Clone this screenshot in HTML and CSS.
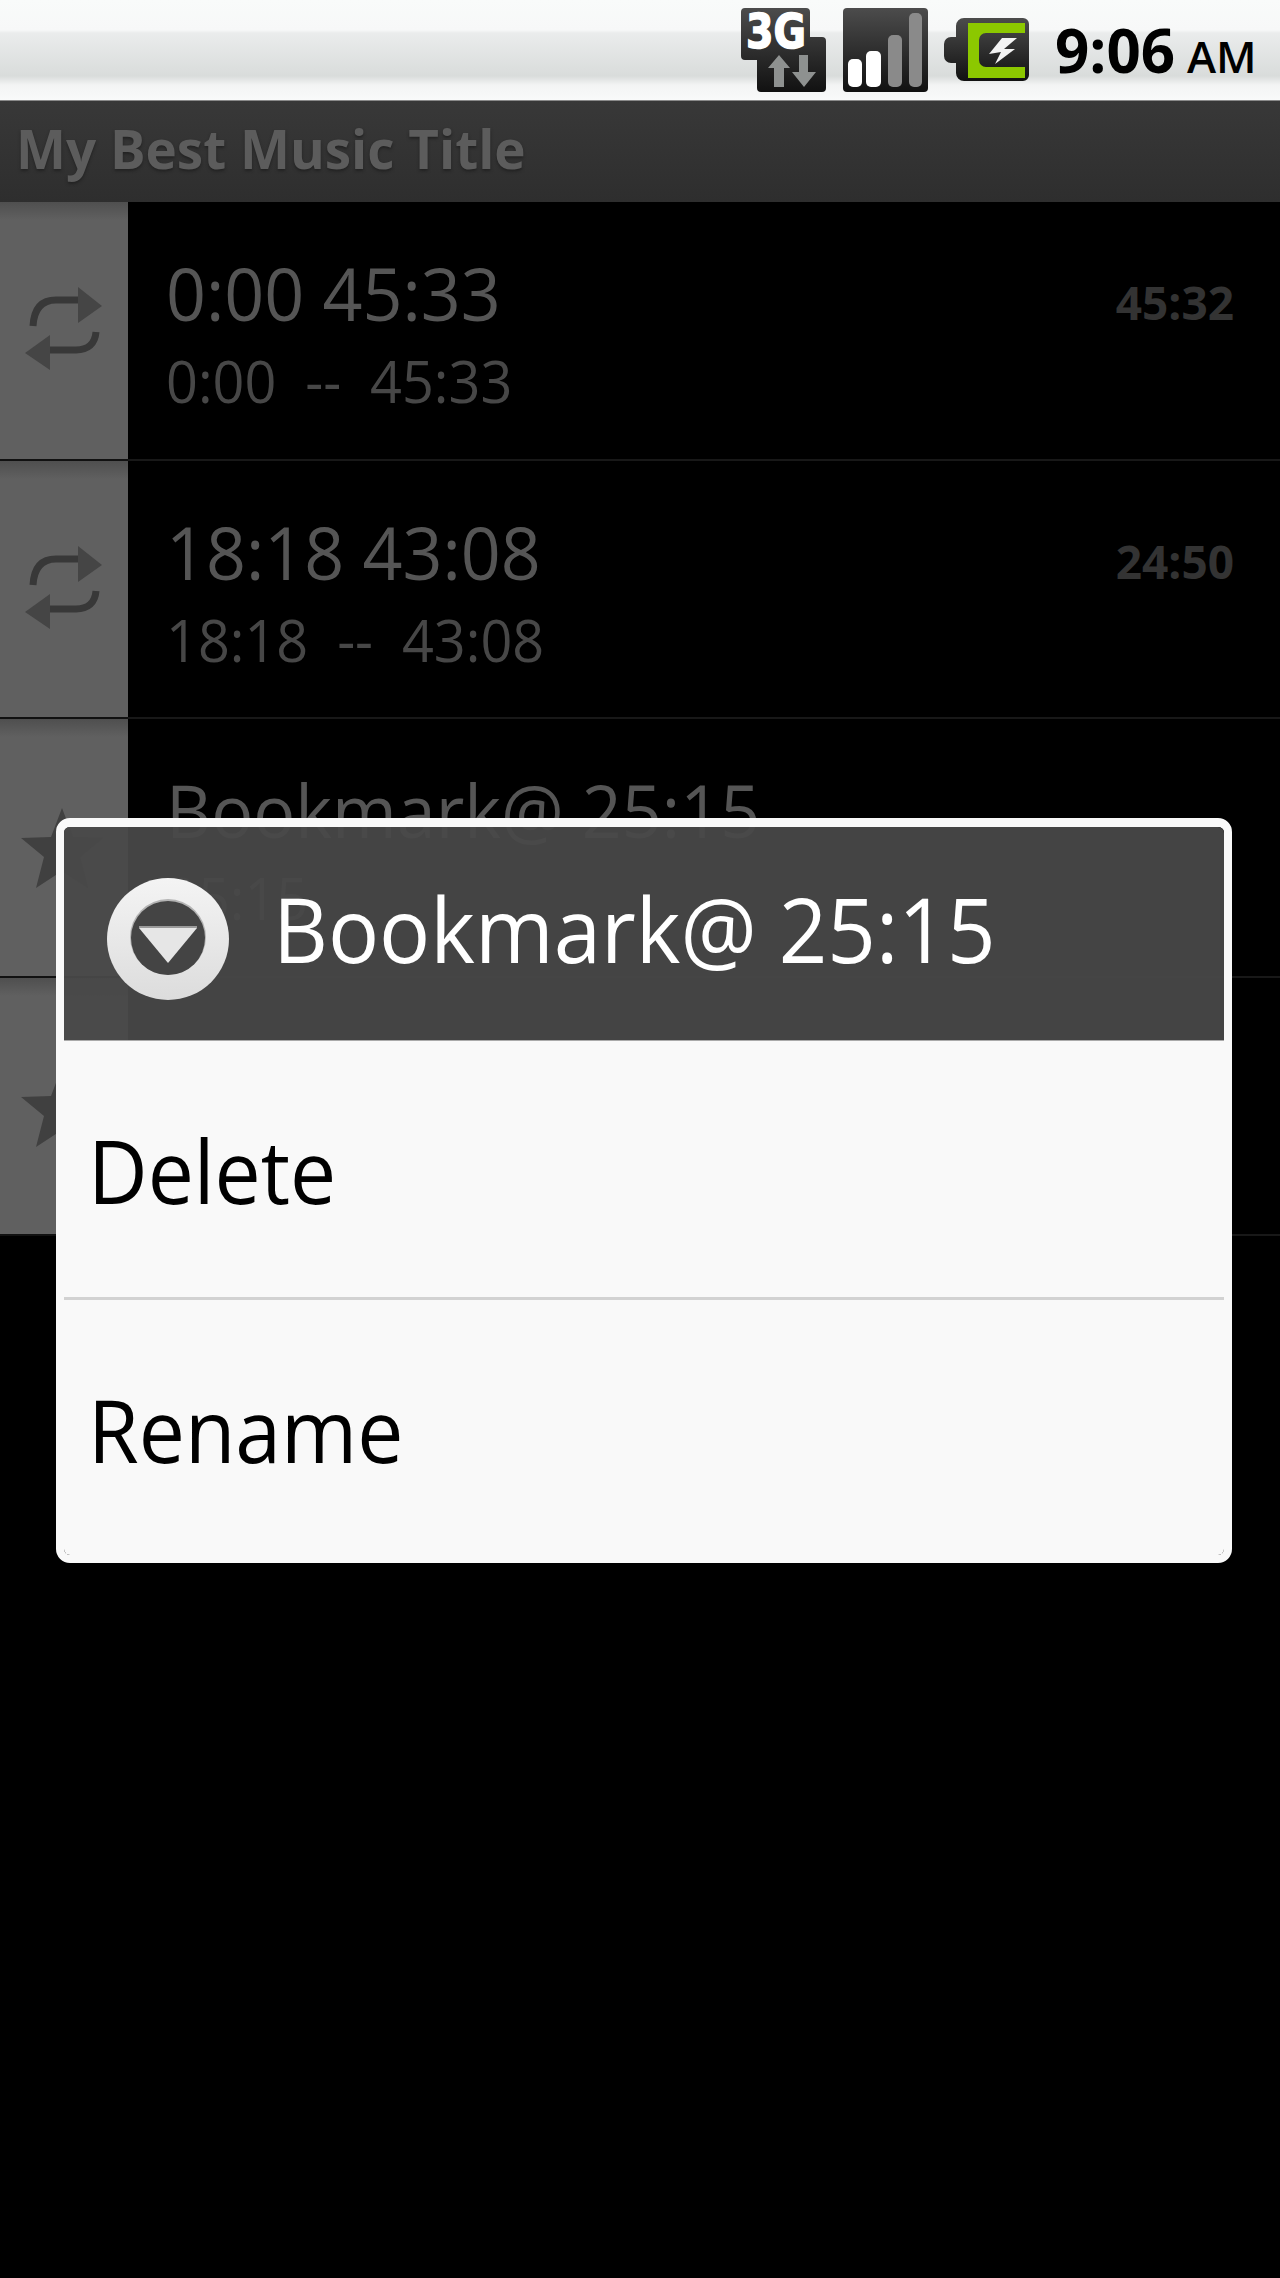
FILE: index.html
```html
<!DOCTYPE html>
<html lang="en">
<head>
  <meta charset="UTF-8" />
  <title>My Best Music Title</title>
  <link rel="stylesheet" href="styles.css">
</head>
<body>

  <div class="screen">
    <div class="status-bar">
      <!-- 3G data icon -->
      <svg class="icon-3g" width="86" height="84" viewBox="0 0 86 84">
        <path d="M4 0H65a4 4 0 0 1 4 4V29H81a4 4 0 0 1 4 4V80a4 4 0 0 1-4 4H20a4 4 0 0 1-4-4V52H4a4 4 0 0 1-4-4V4a4 4 0 0 1 4-4z" fill="url(#iconDark)"/>
        <text x="5" y="40" class="icon-3g-text" textLength="60" lengthAdjust="spacingAndGlyphs">3G</text>
        <path d="M38 47l11 13h-6v19h-10V60h-6z" fill="#8e9190"/>
        <path d="M58 47h9v17h8l-12 15-12-15h7z" fill="#8e9190"/>
      </svg>
      <!-- signal bars -->
      <svg class="icon-signal" width="85" height="84" viewBox="0 0 85 84">
        <rect width="85" height="84" rx="4" fill="url(#iconDark)"/>
        <rect x="5" y="51" width="14" height="28" rx="5" fill="#fff"/>
        <rect x="23" y="43" width="15" height="36" rx="5" fill="#fff"/>
        <rect x="45" y="27" width="14" height="52" rx="5" fill="#8a8a8a"/>
        <rect x="66" y="5" width="13" height="74" rx="5" fill="#8a8a8a"/>
      </svg>
      <!-- charging battery -->
      <svg class="icon-battery" width="85" height="63" viewBox="0 0 85 63">
        <path d="M20 0H79a6 6 0 0 1 6 6V57a6 6 0 0 1-6 6H20a8 8 0 0 1-8-8V45H7a7 7 0 0 1-7-7V26a7 7 0 0 1 7-7h5V8a8 8 0 0 1 8-8z" fill="url(#iconDark)"/>
        <path d="M24 5H81V15H42a7 7 0 0 0-7 7V42a7 7 0 0 0 7 7H81V60H24z" fill="#8cc800"/>
        <path d="M73 20H58L45 36 57 34 51 46 71 31H60z" fill="#f4f4f4"/>
      </svg>
      <div class="clock">9:06<span class="clock-ampm">AM</span></div>
    </div>

    <div class="title-bar">My Best Music Title</div>

    <div class="bookmark-list">
      <div class="row">
        <div class="row-icon">
          <svg width="128" height="128" viewBox="0 0 128 128"><use href="#repeatIcon"/></svg>
        </div>
        <div class="row-text">
          <div class="row-title">0:00 45:33</div>
          <div class="row-sub">0:00  --  45:33</div>
        </div>
        <div class="row-time">45:32</div>
      </div>

      <div class="row">
        <div class="row-icon">
          <svg width="128" height="128" viewBox="0 0 128 128"><use href="#repeatIcon"/></svg>
        </div>
        <div class="row-text">
          <div class="row-title">18:18 43:08</div>
          <div class="row-sub">18:18  --  43:08</div>
        </div>
        <div class="row-time">24:50</div>
      </div>

      <div class="row">
        <div class="row-icon">
          <svg width="128" height="128" viewBox="0 0 128 128"><use href="#starIcon"/></svg>
        </div>
        <div class="row-text">
          <div class="row-title">Bookmark@ 25:15</div>
          <div class="row-sub">25:15</div>
        </div>
      </div>

      <div class="row">
        <div class="row-icon">
          <svg width="128" height="128" viewBox="0 0 128 128"><use href="#starIcon"/></svg>
        </div>
      </div>
    </div>

    <!-- Context menu over the list -->
    <div class="dialog">
      <div class="dialog-header">
        <svg class="dialog-icon" width="122" height="122" viewBox="0 0 122 122">
          <circle cx="61" cy="61" r="61" fill="url(#ringFill)"/>
          <circle cx="61" cy="59" r="38" fill="#b4b4b4"/>
          <circle cx="61" cy="60" r="37" fill="#444"/>
          <path d="M32 50H90L61 85z" fill="#e6e6e6"/>
          <rect x="32" y="48" width="58" height="2" fill="#9a9a9a"/>
        </svg>
        <div class="dialog-title">Bookmark@ 25:15</div>
      </div>
      <div class="dialog-menu">
        <div class="menu-item"><span class="menu-label">Delete</span></div>
        <div class="menu-item"><span class="menu-label">Rename</span></div>
      </div>
    </div>
  </div>

  <!-- Shared icon shapes and gradients -->
  <svg class="svg-defs" width="0" height="0">
    <defs>
      <linearGradient id="iconDark" x1="0" y1="0" x2="0" y2="1">
        <stop offset="0" stop-color="#4c4c4c"/>
        <stop offset="1" stop-color="#111"/>
      </linearGradient>
      <linearGradient id="ringFill" x1="0" y1="0" x2="0" y2="1">
        <stop offset="0" stop-color="#f4f4f4"/>
        <stop offset="1" stop-color="#dcdcdc"/>
      </linearGradient>
      <g id="repeatIcon">
        <path d="M33 60C34 42 42 34 56 34H80" fill="none" stroke="#383838" stroke-width="7"/>
        <path d="M78 21L102 40 78 57z" fill="#454545"/>
        <path d="M96 66C95 78 88 84 76 84H48" fill="none" stroke="#383838" stroke-width="7"/>
        <path d="M50 69L25 87 50 104z" fill="#454545"/>
      </g>
      <g id="starIcon">
        <path d="M62 25L73 54 103 55 80 74 88 105 62 88 36 105 44 74 21 55 51 54z" fill="#404040"/>
      </g>
    </defs>
  </svg>

</body>
</html>
```

FILE: styles.css
```css
html, body {
  margin: 0;
  background: #000;
}

body {
  font-family: "Open Sans", "Noto Sans", sans-serif;
  min-height: 2278px;
}

.screen {
  position: relative;
  width: 1280px;
}

.svg-defs {
  position: absolute;
}

/* status bar */
.status-bar {
  height: 101px;
  box-sizing: border-box;
  display: flex;
  align-items: flex-start;
  background: linear-gradient(#f9fbfa 0, #f7f8f8 30%, #eaecec 33%, #d9dcdb 76%, #f3f4f4 85%, #f9fafa 100%);
  border-bottom: 1px solid #8a8a8a;
  padding-left: 741px;
}

.icon-3g {
  margin-top: 8px;
  overflow: visible;
}

.icon-3g-text {
  font-family: "DejaVu Sans", sans-serif;
  font-size: 48px;
  font-weight: bold;
  fill: #fff;
  stroke: #fff;
  stroke-width: 1.5px;
}

.icon-signal {
  margin: 8px 0 0 16px;
}

.icon-battery {
  margin: 18px 0 0 16px;
}

.clock {
  margin-left: 26px;
  font-size: 60px;
  font-weight: 700;
  line-height: 100px;
  color: #000;
  white-space: nowrap;
}

.clock-ampm {
  margin-left: 12px;
  font-size: 44px;
  font-weight: 600;
}

/* title bar */
.title-bar {
  height: 101px;
  box-sizing: border-box;
  padding-left: 16px;
  background: linear-gradient(#383838, #2e2e2e);
  color: #5c5c5c;
  font-size: 53px;
  font-weight: 700;
  line-height: 96px;
  text-shadow: 0 2px 3px #222;
}

/* list rows */
.row {
  display: flex;
  height: 258.5px;
  box-sizing: border-box;
  border-bottom: 2px solid #181818;
}

.row-icon {
  width: 128px;
  flex: none;
  display: flex;
  align-items: center;
  margin-bottom: -2px;
  border-bottom: 2px solid #111;
  background: linear-gradient(#4f4f4f 0, #606060 18px, #606060 100%);
}

.row-text {
  flex: 1;
  padding: 46px 0 0 38px;
}

/* Open Sans runs wider than the phone font, so squeeze it a little */
.row-title,
.row-sub,
.dialog-title,
.menu-label {
  transform: scaleX(0.945);
  transform-origin: left;
}

.row-title {
  font-size: 74px;
  line-height: 90px;
  color: #555;
}

.row-sub {
  margin-top: 2px;
  font-size: 59px;
  line-height: 80px;
  color: #474747;
  white-space: pre;
}

.row-time {
  padding: 68px 46px 0 0;
  font-size: 46px;
  font-weight: 700;
  line-height: 64px;
  color: #333;
}

/* context menu dialog */
.dialog {
  position: absolute;
  top: 818px;
  left: 56px;
  width: 1176px;
  height: 745px;
  box-sizing: border-box;
  border-style: solid;
  border-color: #f9f9f9;
  border-width: 9px 8px 8px;
  border-radius: 14px;
}

.dialog-header {
  height: 214px;
  box-sizing: border-box;
  display: flex;
  align-items: center;
  padding-left: 43px;
  background: rgba(72, 72, 72, 0.94);
  border-bottom: 1px solid #aaa;
  border-radius: 6px 6px 0 0;
}

.dialog-icon {
  flex: none;
  margin-top: 10px;
}

.dialog-title {
  margin: 0 0 12px 44px;
  font-size: 90px;
  line-height: 100px;
  color: #fff;
}

.dialog-menu {
  height: 514px;
  background: #f9f9f9;
  border-radius: 0 0 6px 6px;
}

.menu-item {
  height: 259px;
  box-sizing: border-box;
  padding-left: 24px;
  font-size: 87px;
  line-height: 258px;
  color: #000;
  border-bottom: 3px solid #d2d2d2;
}

.menu-item:last-child {
  height: 255px;
  border-bottom: none;
}

.menu-label {
  display: inline-block;
}
```
